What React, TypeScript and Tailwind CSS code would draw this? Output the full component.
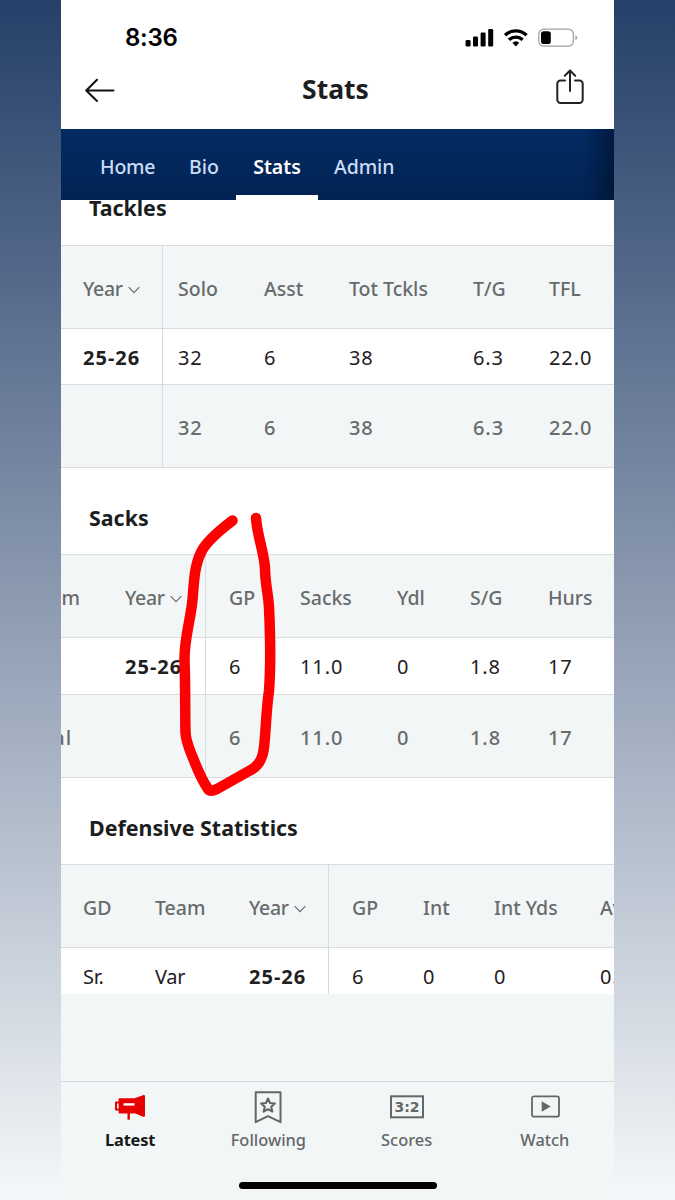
import clsx from "clsx";

type Column = {
  head: string;
  value: string;
  total?: string;
  className: string;
  valueClass?: string;
  sort?: boolean;
};

type StatTable = {
  title: string;
  titleClass?: string;
  rowClass: string;
  columns: Column[];
};

const tables: StatTable[] = [
  {
    title: "Tackles",
    titleClass: "-mt-[42px] mb-px",
    rowClass: "h-14",
    columns: [
      { head: "Year", value: "25-26", total: "", className: "w-[102px] pl-[22px] border-r", sort: true },
      { head: "Solo", value: "32", total: "32", className: "w-[86px] pl-[15px]" },
      { head: "Asst", value: "6", total: "6", className: "w-[85px] pl-[15px]" },
      { head: "Tot Tckls", value: "38", total: "38", className: "w-[124px] pl-[15px]" },
      { head: "T/G", value: "6.3", total: "6.3", className: "w-[76px] pl-[15px]" },
      { head: "TFL", value: "22.0", total: "22.0", className: "w-[80px] pl-[15px]" },
    ],
  },
  {
    title: "Sacks",
    rowClass: "h-[57px]",
    columns: [
      { head: "Team", value: "", total: "Total", className: "w-[42px] justify-end", valueClass: "pr-[31px]" },
      { head: "Year", value: "25-26", total: "", className: "w-[103px] pl-[22px] border-r", sort: true },
      { head: "GP", value: "6", total: "6", className: "w-[80px] pl-[23px]" },
      { head: "Sacks", value: "11.0", total: "11.0", className: "w-[96px] pl-[14px]" },
      { head: "Ydl", value: "0", total: "0", className: "w-[73px] pl-[15px]" },
      { head: "S/G", value: "1.8", total: "1.8", className: "w-[78px] pl-[15px]" },
      { head: "Hurs", value: "17", total: "17", className: "w-[81px] pl-[15px]" },
    ],
  },
  {
    title: "Defensive Statistics",
    rowClass: "h-[57px]",
    columns: [
      { head: "GD", value: "Sr.", className: "w-[72px] pl-[22px]" },
      { head: "Team", value: "Var", className: "w-[94px] pl-[22px]" },
      { head: "Year", value: "25-26", className: "w-[102px] pl-[22px] border-r", sort: true },
      { head: "GP", value: "6", className: "w-[79px] pl-[23px]" },
      { head: "Int", value: "0", className: "w-[71px] pl-[15px]" },
      { head: "Int Yds", value: "0", className: "w-[106px] pl-[15px]" },
      { head: "Avg", value: "0.0", className: "w-[80px] pl-[15px]" },
    ],
  },
];

const Chevron = () => (
  <svg className="ml-[5px] mt-0.5 h-2 w-3 shrink-0" viewBox="0 0 12 8" fill="none" stroke="#686b6c" strokeWidth="1.2">
    <path d="M.7 1.2 6 6.6l5.3-5.4" />
  </svg>
);

const Table = ({ title, titleClass, rowClass, columns }: StatTable) => {
  const hasTotal = columns.some((c) => c.total !== undefined);

  return (
    <section>
      <h2 className={clsx("flex h-[86px] items-center pl-7 pt-[13px] text-[21.4px] font-bold text-[#1c1d1e]", titleClass)}>
        {title}
      </h2>
      <div className="flex h-[83px] overflow-hidden border-t border-[#d9dcde] bg-[#f3f6f7] font-medium text-[#686b6c]">
        {columns.map((c) => (
          <div key={c.head} className={clsx("flex shrink-0 items-center whitespace-nowrap border-[#d9dcde] pt-1", c.className)}>
            <span className={clsx(c.valueClass && "pr-[23px]", c.sort && "tracking-[-0.3px]")}>{c.head}</span>
            {c.sort && <Chevron />}
          </div>
        ))}
      </div>
      <div className={clsx("flex overflow-hidden border-t border-[#d9dcde] text-[20px] text-[#1f2021]", rowClass)}>
        {columns.map((c) => (
          <div
            key={c.head}
            className={clsx(
              "flex shrink-0 items-center whitespace-nowrap border-[#d9dcde] pt-[2px]",
              c.className,
              c.sort ? "font-bold tracking-[1px]" : /\d/.test(c.value) ? "tracking-[0.9px]" : "tracking-[-0.3px]"
            )}
          >
            {c.value}
          </div>
        ))}
      </div>
      {hasTotal && (
        <div className="flex h-[84px] overflow-hidden border-y border-[#d9dcde] bg-[#f3f6f7] text-[20px] font-medium text-[#686b6c]">
          {columns.map((c) => (
            <div key={c.head} className={clsx("flex shrink-0 items-center whitespace-nowrap border-[#d9dcde] pt-[3px] tracking-[0.9px]", c.className, c.valueClass)}>
              {c.total}
            </div>
          ))}
        </div>
      )}
    </section>
  );
};

const StatusBar = () => (
  <div className="flex h-[57px] items-center justify-between pl-16 pr-9 pt-[18px]">
    <span className="font-[Inter,sans-serif] text-[24px] font-semibold leading-none tracking-[-0.3px] text-black">8:36</span>
    <svg className="h-5 w-[113px]" viewBox="0 0 113 20">
      <g fill="#000">
        <rect x="0.6" y="12" width="5" height="6.5" rx="1.3" />
        <rect x="8" y="8.4" width="5" height="10.1" rx="1.3" />
        <rect x="15.6" y="4.4" width="5" height="14.1" rx="1.3" />
        <rect x="23.2" y="1" width="5" height="17.5" rx="1.3" />
      </g>
      <g fill="none" stroke="#000" strokeWidth="3.3">
        <path d="M40 7.3a15.6 15.6 0 0 1 21.6 0" />
        <path d="M44 11.9a9.8 9.8 0 0 1 13.6 0" />
      </g>
      <path d="m50.800 18.400-3.400-3.600a5 5 0 0 1 6.800 0z" fill="#000" />
      <rect x="73.800" y="1.200" width="34.600" height="17" rx="5" fill="none" stroke="#a2a2a2" strokeWidth="1.300" />
      <path d="M110.300 7.200c2.400.7 2.400 4.300 0 5z" fill="#a2a2a2" />
      <rect x="76" y="3.300" width="9.800" height="12.800" rx="2.800" fill="#000" />
    </svg>
  </div>
);

const TitleBar = () => (
  <header className="flex h-[72px] items-center justify-between pl-[23px] pr-[29px] pb-[6px]">
    <svg className="h-6 w-8" viewBox="0 0 32 24" fill="none" stroke="#111" strokeWidth="2" strokeLinecap="round" strokeLinejoin="round">
      <path d="M29.500 12.500H2.500M13 1.800 2.200 12.500 13 23" />
    </svg>
    <h1 className="mb-px text-[26.500px] font-bold leading-none text-[#1c1d1e]">Stats</h1>
    <svg className="mb-[7px] h-9 w-[30px]" viewBox="0 0 30 36" fill="none" stroke="#222" strokeWidth="2" strokeLinecap="round" strokeLinejoin="round">
      <path d="M10 11.500H5.500a3.200 3.200 0 0 0-3.200 3.200v16.100A3.200 3.200 0 0 0 5.500 34h19a3.200 3.200 0 0 0 3.200-3.200V14.700a3.200 3.200 0 0 0-3.200-3.200H20" />
      <path d="M15 22V1.500M9.800 6.700 15 1.500l5.200 5.200" />
    </svg>
  </header>
);

const NavTabs = () => (
  <nav className="relative z-10 flex h-[71px] bg-linear-to-b from-[#032b63] to-[#012353] pl-[22px] text-[19.500px] font-medium leading-none text-[#cbdcf6]">
    <span className="flex w-[89px] items-center pl-[17px] pt-1 tracking-[-0.200px]">Home</span>
    <span className="flex w-[64px] items-center pl-[17px] pt-1">Bio</span>
    <span className="flex w-[82px] items-center justify-center border-b-[5px] border-white pt-[9px] font-semibold text-white">Stats</span>
    <span className="flex items-center pl-4 pt-1 tracking-[-0.100px]">Admin</span>
    <div className="ml-auto w-8 bg-linear-to-r from-transparent to-[#001331]/70" />
  </nav>
);

const LatestIcon = () => (
  <svg className="h-9 w-9" viewBox="0 0 36 36" fill="#e60000">
    <path d="M7.500 10.200h15L31 7.200c1.200-.3 2 .2 2 1.300v19c0 1.200-.8 1.600-2 1.200l-7.500-3.200h-5.600v6.200h-2.400v-6.200h-8c-.6 0-.9-.3-.9-.9V11.200c0-.6.3-1 .9-1z" />
    <path d="M7.500 14.600H4v6.800h3.500" fill="none" stroke="#e60000" strokeWidth="2" strokeLinejoin="round" />
    <path d="M11.500 15.200h11v2.400h-11z" fill="#fff" />
  </svg>
);

const FollowingIcon = () => (
  <svg className="h-9 w-9" viewBox="0 0 36 36" fill="none" stroke="#646768" strokeWidth="2">
    <path d="M5.700 4.200h24.800v30L18 28.200 5.700 34.200z" strokeLinejoin="round" />
    <path d="m18 10.500 2 4.500 4.900.5-3.700 3.300 1.100 4.800L18 21.100l-4.300 2.500 1.100-4.800-3.700-3.300L16 15z" strokeWidth="2.100" strokeLinejoin="round" />
  </svg>
);

const ScoresIcon = () => (
  <svg className="h-9 w-9" viewBox="0 0 36 36">
    <rect x="2" y="8.300" width="32" height="21" fill="none" stroke="#646768" strokeWidth="2" />
    <text x="18" y="24.200" textAnchor="middle" textLength="25" lengthAdjust="spacingAndGlyphs" fontFamily="DejaVu Sans, sans-serif" fontSize="14.500" fontWeight="700" fill="#646768">
      3:2
    </text>
  </svg>
);

const WatchIcon = () => (
  <svg className="h-9 w-9" viewBox="0 0 36 36">
    <rect x="5" y="8.300" width="27" height="20.400" rx="2" fill="none" stroke="#646768" strokeWidth="1.800" />
    <path d="M14.700 13.300v10.400l9-5.200z" fill="#646768" />
  </svg>
);

const tabs = [
  { label: "Latest", icon: <LatestIcon />, active: true },
  { label: "Following", icon: <FollowingIcon /> },
  { label: "Scores", icon: <ScoresIcon /> },
  { label: "Watch", icon: <WatchIcon /> },
];

const TabBar = () => (
  <footer className="flex h-[119px] flex-col items-center border-t border-[#d5d9db] bg-[#f3f6f7]">
    <div className="grid w-full grid-cols-4 pt-[6px]">
      {tabs.map((tab) => (
        <div
          key={tab.label}
          className={clsx(
            "flex flex-col items-center gap-[6px] text-[16.400px] leading-5",
            tab.active ? "font-bold tracking-[-0.200px] text-[#171819]" : "font-medium text-[#646768]"
          )}
        >
          {tab.icon}
          {tab.label}
        </div>
      ))}
    </div>
    <div className="mt-8 h-[7px] w-[198px] rounded-full bg-black" />
  </footer>
);

const Scribble = () => (
  <svg className="pointer-events-none absolute left-[110px] top-[500px] z-20 h-[310px] w-[180px]" viewBox="171 500 180 310" fill="none" stroke="#fe0000" strokeWidth="10.500" strokeLinecap="round" strokeLinejoin="round">
    <path d="M232.500 520.500C224 527 207 540 201.500 551.500C194 566 194 583 192.500 600C190.500 620 184 640 184.500 660C185.500 690 185 710 185.500 733C186 743 191 753 195 763C199 773 204 783 208 789C210 792 213 791 217 789L249 771C260 766 263 757 264 747C266 731 266 711 269 691C271 664 270 629 269 607C268 592 265 583 265 568C264 552 257 535 256 518" />
  </svg>
);

const App = () => {
  return (
    <div className="flex h-[1200px] w-[675px] justify-center overflow-hidden bg-linear-to-b from-[#264069] via-[#8d9bb1] to-[#f5f8f9] font-['Noto_Sans',sans-serif]">
      <div className="relative flex h-full w-[553px] flex-col bg-white">
        <StatusBar />
        <TitleBar />
        <NavTabs />
        <main className="h-[794px] overflow-hidden text-[19.500px] leading-none">
          {tables.map((table) => (
            <Table key={table.title} {...table} />
          ))}
        </main>
        <div className="flex-1 bg-[#f3f6f7]" />
        <TabBar />
        <Scribble />
      </div>
    </div>
  );
};

export default App;
